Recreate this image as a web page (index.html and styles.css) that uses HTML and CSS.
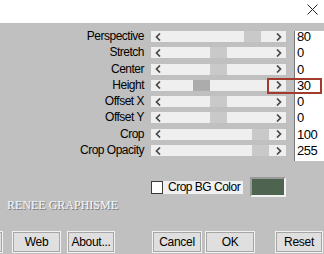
FILE: index.html
```html
<!DOCTYPE html>
<html lang="en">
<head>
  <meta charset="UTF-8" />
  <meta name="viewport" content="width=device-width, initial-scale=1.0" />
  <title>Perspective Settings</title>
  <link rel="stylesheet" href="styles.css">
</head>
<body>
  <div class="titlebar">
    <svg class="close" width="11" height="11" viewBox="0 0 11 11">
      <path d="M0.5 0.5 L10.5 10.5 M10.5 0.5 L0.5 10.5" stroke="#222" stroke-width="1" fill="none" />
    </svg>
  </div>

  <div class="dialog">
    <div class="sliders">
      <div class="row">
        <span class="label">Perspective</span>
        <div class="track">
          <svg class="arrow" width="6" height="8" viewBox="0 0 6 8"><path d="M5 0.5 L1.5 4 L5 7.5" /></svg>
          <span class="thumb" style="left: 93px"></span>
          <svg class="arrow" width="6" height="8" viewBox="0 0 6 8"><path d="M1 0.5 L4.5 4 L1 7.5" /></svg>
        </div>
        <div class="value">80</div>
      </div>
      <div class="row">
        <span class="label">Stretch</span>
        <div class="track">
          <svg class="arrow" width="6" height="8" viewBox="0 0 6 8"><path d="M5 0.5 L1.5 4 L5 7.5" /></svg>
          <span class="thumb" style="left: 59px"></span>
          <svg class="arrow" width="6" height="8" viewBox="0 0 6 8"><path d="M1 0.5 L4.5 4 L1 7.5" /></svg>
        </div>
        <div class="value">0</div>
      </div>
      <div class="row">
        <span class="label">Center</span>
        <div class="track">
          <svg class="arrow" width="6" height="8" viewBox="0 0 6 8"><path d="M5 0.5 L1.5 4 L5 7.5" /></svg>
          <span class="thumb" style="left: 59px"></span>
          <svg class="arrow" width="6" height="8" viewBox="0 0 6 8"><path d="M1 0.5 L4.5 4 L1 7.5" /></svg>
        </div>
        <div class="value">0</div>
      </div>
      <div class="row">
        <span class="label">Height</span>
        <div class="track">
          <svg class="arrow" width="6" height="8" viewBox="0 0 6 8"><path d="M5 0.5 L1.5 4 L5 7.5" /></svg>
          <span class="thumb focused" style="left: 42px"></span>
          <svg class="arrow" width="6" height="8" viewBox="0 0 6 8"><path d="M1 0.5 L4.5 4 L1 7.5" /></svg>
        </div>
        <div class="value">30</div>
        <div class="highlight"></div>
      </div>
      <div class="row">
        <span class="label">Offset X</span>
        <div class="track">
          <svg class="arrow" width="6" height="8" viewBox="0 0 6 8"><path d="M5 0.5 L1.5 4 L5 7.5" /></svg>
          <span class="thumb" style="left: 59px"></span>
          <svg class="arrow" width="6" height="8" viewBox="0 0 6 8"><path d="M1 0.5 L4.5 4 L1 7.5" /></svg>
        </div>
        <div class="value">0</div>
      </div>
      <div class="row">
        <span class="label">Offset Y</span>
        <div class="track">
          <svg class="arrow" width="6" height="8" viewBox="0 0 6 8"><path d="M5 0.5 L1.5 4 L5 7.5" /></svg>
          <span class="thumb" style="left: 59px"></span>
          <svg class="arrow" width="6" height="8" viewBox="0 0 6 8"><path d="M1 0.5 L4.5 4 L1 7.5" /></svg>
        </div>
        <div class="value">0</div>
      </div>
      <div class="row">
        <span class="label">Crop</span>
        <div class="track">
          <svg class="arrow" width="6" height="8" viewBox="0 0 6 8"><path d="M5 0.5 L1.5 4 L5 7.5" /></svg>
          <span class="thumb" style="left: 101px"></span>
          <svg class="arrow" width="6" height="8" viewBox="0 0 6 8"><path d="M1 0.5 L4.5 4 L1 7.5" /></svg>
        </div>
        <div class="value">100</div>
      </div>
      <div class="row">
        <span class="label">Crop Opacity</span>
        <div class="track">
          <svg class="arrow" width="6" height="8" viewBox="0 0 6 8"><path d="M5 0.5 L1.5 4 L5 7.5" /></svg>
          <span class="thumb" style="left: 101px"></span>
          <svg class="arrow" width="6" height="8" viewBox="0 0 6 8"><path d="M1 0.5 L4.5 4 L1 7.5" /></svg>
        </div>
        <div class="value">255</div>
      </div>
    </div>

    <div class="options">
      <label class="check">
        <span class="box"></span>
        <span class="check-text">Crop BG Color</span>
      </label>
      <div class="swatch"></div>
    </div>

    <div class="brand">RENEE GRAPHISME</div>

    <div class="buttons">
      <button class="btn btn-cut"></button>
      <button class="btn btn-web">Web</button>
      <button class="btn btn-about">About...</button>
      <button class="btn btn-cancel">Cancel</button>
      <button class="btn btn-ok">OK</button>
      <button class="btn btn-reset">Reset</button>
    </div>
  </div>
</body>
</html>
```

FILE: styles.css
```css
* {
  margin: 0;
  padding: 0;
  box-sizing: border-box;
}

html, body {
  width: 324px;
  height: 254px;
  overflow: hidden;
  font-family: 'Liberation Sans', Arial, sans-serif;
  font-size: 12px;
  letter-spacing: -0.5px;
  color: #000;
  background: #c0c0c0;
}

.titlebar {
  height: 23px;
  background: #fff;
  display: flex;
  justify-content: flex-end;
  padding: 4px 6px 0 0;
}

.dialog {
  padding-top: 8px;
}

.sliders {
  display: flex;
  flex-direction: column;
}

.row {
  position: relative;
  height: 16.3px;
  display: grid;
  grid-template-columns: 145px 135px 1fr;
}

.label {
  height: 11px;
  line-height: 11px;
  text-align: right;
  padding-right: 1px;
}

.track {
  position: relative;
  height: 11px;
  margin-left: 6px;
  background: #efefef;
  display: flex;
  justify-content: space-between;
  align-items: center;
  padding: 0 4px 0 4px;
  width: 135px;
}

.arrow {
  position: relative;
  z-index: 1;
  fill: none;
  stroke: #484848;
  stroke-width: 1.7;
}

.thumb {
  position: absolute;
  top: 0;
  width: 17px;
  height: 11px;
  background: #c9c9c9;
}

.thumb.focused {
  background: #acacac;
}

.value {
  margin-left: 14px;
  height: 16.3px;
  background: #fff;
  border-left: 1px solid #777;
  padding-left: 2px;
  line-height: 11px;
  font-size: 13px;
}

.highlight {
  position: absolute;
  left: 267px;
  top: -2px;
  width: 55px;
  height: 16px;
  border: 2px solid #a23a2e;
}

.options {
  display: flex;
  align-items: center;
  padding-left: 151px;
  margin-top: 16px;
  gap: 7px;
}

.check {
  display: flex;
  align-items: center;
  height: 13px;
}

.box {
  width: 12px;
  height: 13px;
  background: #fff;
  border: 1px solid #3a3a3a;
}

.check-text {
  height: 13px;
  width: 80px;
  line-height: 13px;
  padding-left: 5px;
  white-space: nowrap;
  background: #f0f0f0;
}

.swatch {
  width: 36px;
  height: 20px;
  background: #4e6350;
  border: 2px solid;
  border-color: #9a9a9a #f2f2f2 #f2f2f2 #9a9a9a;
}

.brand {
  margin-top: 1px;
  padding-left: 7px;
  font-family: 'Liberation Serif', serif;
  font-size: 12px;
  letter-spacing: 0;
  line-height: 14px;
  color: #f6f6f6;
  text-shadow: 1px 1px 0 #7a7a7a;
}

.buttons {
  display: flex;
  margin-top: 19px;
}

.btn {
  height: 22px;
  font-family: inherit;
  font-size: 12px;
  letter-spacing: -0.3px;
  color: #000;
  background: #dfdfdf;
  border: 1px solid #f2f2f2;
  box-shadow: inset 0 0 0 1px #a6a6a6;
  flex: none;
}

.btn-cut {
  width: 48px;
  margin-left: -45px;
}

.btn-web {
  width: 49px;
  margin-left: 9px;
}

.btn-about {
  width: 48px;
  margin-left: 6px;
}

.btn-cancel {
  width: 50px;
  margin-left: 37px;
}

.btn-ok {
  width: 50px;
  margin-left: 3px;
}

.btn-reset {
  width: 48px;
  margin-left: 20px;
}
```
